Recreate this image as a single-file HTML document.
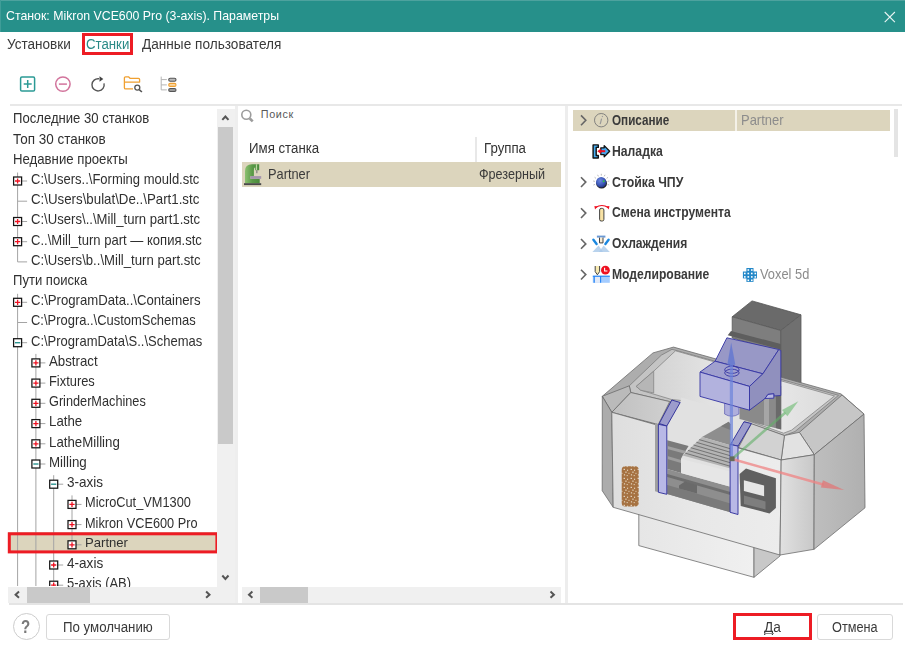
<!DOCTYPE html>
<html><head><meta charset="utf-8">
<style>
html,body{margin:0;padding:0;}
body{width:905px;height:656px;position:relative;overflow:hidden;background:#fff;font-family:"Liberation Sans",sans-serif;color:#333;}
.abs{position:absolute;}
.t{position:absolute;white-space:nowrap;}
#title{left:0;top:0;width:905px;height:32px;background:#26908a;}
#title .hl{position:absolute;left:0;top:0;width:905px;height:1px;background:#4da29e;}
#title .t{left:6px;top:0;line-height:32px;font-size:11.5px;color:#fff;}
.menu{top:33px;line-height:22px;font-size:13.4px;color:#3a3a3a;}
.row{position:absolute;left:0;height:20.21px;line-height:20.21px;font-size:12.5px;color:#333;white-space:nowrap;}
.pm{position:absolute;width:8px;height:8px;border:1px solid #4a4a4a;background:#fff;box-sizing:content-box;}
.pm i{position:absolute;background:#e01020;}
.pm i.h{left:1px;top:3px;width:6px;height:2px;}
.pm i.v{left:3px;top:1px;width:2px;height:6px;}
.pm.minus i.h{background:#208080;left:1px;top:3.5px;height:1px;}
.vl{position:absolute;width:1px;background:#808080;}
.hl2{position:absolute;height:1px;background:#808080;}
.btn{position:absolute;box-sizing:border-box;border:1.2px solid #d9d9d9;border-radius:3px;background:#fff;font-size:13px;color:#333;text-align:center;}
.prow{position:absolute;font-size:12.5px;font-weight:bold;color:#333;white-space:nowrap;}
</style></head><body>
<!-- TITLE -->
<div id="title" class="abs"><div class="hl"></div><div class="abs" style="left:0;top:0;width:1px;height:32px;background:#3f9d98"></div>
<svg class="abs" style="left:880px;top:7px" width="20" height="20"><path d="M4.7 5 L14.9 15.2 M14.9 5 L4.7 15.2" stroke="#e8f4f3" stroke-width="1.1" fill="none"/></svg>
</div>
<!-- MENU -->
<div class="t" style="left:5.60px;top:5.90px;line-height:20px;font-size:13.0px;letter-spacing:0.000px;color:#fff;transform:scaleX(0.9476);transform-origin:0 0;">Станок: Mikron VCE600 Pro (3-axis). Параметры</div>
<div class="t" style="left:7.00px;top:33.73px;line-height:20px;font-size:15.2px;letter-spacing:0.000px;color:#3a3a3a;transform:scaleX(0.8917);transform-origin:0 0;">Установки</div>
<div class="t" style="left:85.50px;top:33.73px;line-height:20px;font-size:15.2px;letter-spacing:0.000px;color:#2a8a86;transform:scaleX(0.8702);transform-origin:0 0;">Станки</div>
<div class="t" style="left:141.70px;top:33.73px;line-height:20px;font-size:15.2px;letter-spacing:0.000px;color:#3a3a3a;transform:scaleX(0.8977);transform-origin:0 0;">Данные пользователя</div>
<div class="abs" style="left:82.1px;top:33px;width:50.9px;height:22.1px;box-sizing:border-box;border:3px solid #ed1c24"></div>
<!-- TOOLBAR placeholder -->
<svg class="abs" style="left:0;top:66px" width="200" height="36" viewBox="0 66 200 36" fill="none">
<rect x="20.6" y="77.1" width="14" height="14" rx="1.3" stroke="#2b9a95" stroke-width="1.5"/>
<path d="M23.7 84.1 H31.7 M27.7 80.1 V88.1" stroke="#2b9a95" stroke-width="1.5"/>
<circle cx="62.9" cy="84.1" r="7.2" stroke="#d2749c" stroke-width="1.5"/>
<path d="M58.9 84.1 H66.9" stroke="#d2749c" stroke-width="1.5"/>
<path d="M99 78.8 A6.1 6.1 0 1 0 104 83.4" stroke="#555" stroke-width="1.4"/>
<polygon points="99.5,76.3 103.3,79 99.5,81.8" fill="#444"/>
<path d="M133 88.9 H125.6 Q124.4 88.9 124.4 87.7 V77.8 Q124.4 76.8 125.6 76.8 H128.5 L130 78.3 H138.5 Q139.6 78.3 139.6 79.4 V82.1 H124.4" stroke="#f0a030" stroke-width="1.3" stroke-linejoin="round"/>
<circle cx="137.3" cy="87.6" r="2.5" stroke="#555" stroke-width="1.3"/>
<path d="M139.2 89.6 L141.9 92" stroke="#555" stroke-width="1.6"/>
<path d="M161.2 76.6 V89.9 H166.8 M161.2 79.6 H166.8 M161.2 84.9 H166.8" stroke="#b4b4b4" stroke-width="1"/>
<rect x="168.7" y="78.2" width="7.3" height="3" rx="1.5" stroke="#555" stroke-width="1.1" fill="#bbb"/>
<rect x="168.7" y="83.4" width="7.3" height="3" rx="1.5" stroke="#f0a030" stroke-width="1.1" fill="#f8d8a8"/>
<rect x="168.7" y="88.5" width="7.3" height="3" rx="1.5" stroke="#555" stroke-width="1.1" fill="#999"/>
</svg>

<!-- PANELS -->
<div class="abs" style="left:9.6px;top:103.8px;width:892.4px;height:2px;background:#e8e8e8"></div>
<div class="abs" style="left:8.7px;top:603.2px;width:894.1px;height:1.6px;background:#e4e4e4"></div>
<div class="abs" id="left" style="left:0;top:106px;width:217.4px;height:481px;overflow:hidden">
<div class="abs" style="left:7.8px;top:426.3px;width:210.6px;height:21.1px;background:#dcd5bd"></div>
<svg class="abs" style="left:0;top:0" width="218" height="480" viewBox="0 106 218 480" fill="none"><path d="M17.6 172.5 V261.9" stroke="#a4a4a4" stroke-width="1"/><path d="M17.6 293.8 V590.0" stroke="#a4a4a4" stroke-width="1"/><path d="M35.9 353.9 V590.0" stroke="#a4a4a4" stroke-width="1"/><path d="M53.7 475.2 V590.0" stroke="#a4a4a4" stroke-width="1"/><path d="M72.0 495.4 V544.8" stroke="#a4a4a4" stroke-width="1"/><path d="M21.6 181.0 H27.1" stroke="#a4a4a4" stroke-width="1"/><path d="M17.6 201.2 H27.1" stroke="#a4a4a4" stroke-width="1"/><path d="M21.6 221.5 H27.1" stroke="#a4a4a4" stroke-width="1"/><path d="M21.6 241.7 H27.1" stroke="#a4a4a4" stroke-width="1"/><path d="M17.6 261.9 H27.1" stroke="#a4a4a4" stroke-width="1"/><path d="M21.6 302.3 H27.1" stroke="#a4a4a4" stroke-width="1"/><path d="M17.6 322.5 H27.1" stroke="#a4a4a4" stroke-width="1"/><path d="M21.6 342.7 H27.1" stroke="#a4a4a4" stroke-width="1"/><path d="M39.9 362.9 H45.4" stroke="#a4a4a4" stroke-width="1"/><path d="M39.9 383.1 H45.4" stroke="#a4a4a4" stroke-width="1"/><path d="M39.9 403.3 H45.4" stroke="#a4a4a4" stroke-width="1"/><path d="M39.9 423.6 H45.4" stroke="#a4a4a4" stroke-width="1"/><path d="M39.9 443.8 H45.4" stroke="#a4a4a4" stroke-width="1"/><path d="M39.9 464.0 H45.4" stroke="#a4a4a4" stroke-width="1"/><path d="M57.7 484.2 H63.2" stroke="#a4a4a4" stroke-width="1"/><path d="M76.0 504.4 H81.5" stroke="#a4a4a4" stroke-width="1"/><path d="M76.0 524.6 H81.5" stroke="#a4a4a4" stroke-width="1"/><path d="M76.0 544.8 H81.5" stroke="#a4a4a4" stroke-width="1"/><path d="M57.7 565.0 H63.2" stroke="#a4a4a4" stroke-width="1"/><path d="M57.7 585.2 H63.2" stroke="#a4a4a4" stroke-width="1"/><rect x="13.6" y="177.0" width="8" height="8" fill="#fff" stroke="#151515" stroke-width="1.25"/><path d="M15.0 181.0 H20.2 M17.6 178.4 V183.6" stroke="#ee1020" stroke-width="1.3"/><rect x="13.6" y="217.5" width="8" height="8" fill="#fff" stroke="#151515" stroke-width="1.25"/><path d="M15.0 221.5 H20.2 M17.6 218.9 V224.1" stroke="#ee1020" stroke-width="1.3"/><rect x="13.6" y="237.7" width="8" height="8" fill="#fff" stroke="#151515" stroke-width="1.25"/><path d="M15.0 241.7 H20.2 M17.6 239.1 V244.3" stroke="#ee1020" stroke-width="1.3"/><rect x="13.6" y="298.3" width="8" height="8" fill="#fff" stroke="#151515" stroke-width="1.25"/><path d="M15.0 302.3 H20.2 M17.6 299.7 V304.9" stroke="#ee1020" stroke-width="1.3"/><rect x="13.6" y="338.7" width="8" height="8" fill="#fff" stroke="#151515" stroke-width="1.25"/><path d="M15.0 342.7 H20.2" stroke="#2a9490" stroke-width="1.4"/><rect x="31.9" y="358.9" width="8" height="8" fill="#fff" stroke="#151515" stroke-width="1.25"/><path d="M33.3 362.9 H38.5 M35.9 360.3 V365.5" stroke="#ee1020" stroke-width="1.3"/><rect x="31.9" y="379.1" width="8" height="8" fill="#fff" stroke="#151515" stroke-width="1.25"/><path d="M33.3 383.1 H38.5 M35.9 380.5 V385.7" stroke="#ee1020" stroke-width="1.3"/><rect x="31.9" y="399.3" width="8" height="8" fill="#fff" stroke="#151515" stroke-width="1.25"/><path d="M33.3 403.3 H38.5 M35.9 400.7 V405.9" stroke="#ee1020" stroke-width="1.3"/><rect x="31.9" y="419.6" width="8" height="8" fill="#fff" stroke="#151515" stroke-width="1.25"/><path d="M33.3 423.6 H38.5 M35.9 421.0 V426.2" stroke="#ee1020" stroke-width="1.3"/><rect x="31.9" y="439.8" width="8" height="8" fill="#fff" stroke="#151515" stroke-width="1.25"/><path d="M33.3 443.8 H38.5 M35.9 441.2 V446.4" stroke="#ee1020" stroke-width="1.3"/><rect x="31.9" y="460.0" width="8" height="8" fill="#fff" stroke="#151515" stroke-width="1.25"/><path d="M33.3 464.0 H38.5" stroke="#2a9490" stroke-width="1.4"/><rect x="49.7" y="480.2" width="8" height="8" fill="#fff" stroke="#151515" stroke-width="1.25"/><path d="M51.1 484.2 H56.3" stroke="#2a9490" stroke-width="1.4"/><rect x="68.0" y="500.4" width="8" height="8" fill="#fff" stroke="#151515" stroke-width="1.25"/><path d="M69.4 504.4 H74.6 M72.0 501.8 V507.0" stroke="#ee1020" stroke-width="1.3"/><rect x="68.0" y="520.6" width="8" height="8" fill="#fff" stroke="#151515" stroke-width="1.25"/><path d="M69.4 524.6 H74.6 M72.0 522.0 V527.2" stroke="#ee1020" stroke-width="1.3"/><rect x="68.0" y="540.8" width="8" height="8" fill="#fff" stroke="#151515" stroke-width="1.25"/><path d="M69.4 544.8 H74.6 M72.0 542.2 V547.4" stroke="#ee1020" stroke-width="1.3"/><rect x="49.7" y="561.0" width="8" height="8" fill="#fff" stroke="#151515" stroke-width="1.25"/><path d="M51.1 565.0 H56.3 M53.7 562.4 V567.6" stroke="#ee1020" stroke-width="1.3"/><rect x="49.7" y="581.2" width="8" height="8" fill="#fff" stroke="#151515" stroke-width="1.25"/><path d="M51.1 585.2 H56.3 M53.7 582.6 V587.8" stroke="#ee1020" stroke-width="1.3"/><rect x="9.3" y="533.8" width="207.6" height="18.1" stroke="#ed1c24" stroke-width="3"/></svg>
<div class="t" style="left:13.20px;top:2.34px;line-height:20px;font-size:14.6px;letter-spacing:0.000px;color:#303030;transform:scaleX(0.8974);transform-origin:0 0;">Последние 30 станков</div>
<div class="t" style="left:13.20px;top:22.55px;line-height:20px;font-size:14.6px;letter-spacing:0.000px;color:#303030;transform:scaleX(0.9226);transform-origin:0 0;">Топ 30 станков</div>
<div class="t" style="left:13.20px;top:42.76px;line-height:20px;font-size:14.6px;letter-spacing:0.000px;color:#303030;transform:scaleX(0.9038);transform-origin:0 0;">Недавние проекты</div>
<div class="t" style="left:30.90px;top:62.97px;line-height:20px;font-size:14.6px;letter-spacing:0.000px;color:#303030;transform:scaleX(0.8909);transform-origin:0 0;">C:\Users..\Forming mould.stc</div>
<div class="t" style="left:30.90px;top:83.18px;line-height:20px;font-size:14.6px;letter-spacing:0.000px;color:#303030;transform:scaleX(0.9103);transform-origin:0 0;">C:\Users\bulat\De..\Part1.stc</div>
<div class="t" style="left:30.90px;top:103.39px;line-height:20px;font-size:14.6px;letter-spacing:0.000px;color:#303030;transform:scaleX(0.8984);transform-origin:0 0;">C:\Users\..\Mill_turn part1.stc</div>
<div class="t" style="left:30.90px;top:123.60px;line-height:20px;font-size:14.6px;letter-spacing:0.000px;color:#303030;transform:scaleX(0.8940);transform-origin:0 0;">C..\Mill_turn part — копия.stc</div>
<div class="t" style="left:30.90px;top:143.81px;line-height:20px;font-size:14.6px;letter-spacing:0.000px;color:#303030;transform:scaleX(0.9010);transform-origin:0 0;">C:\Users\b..\Mill_turn part.stc</div>
<div class="t" style="left:13.20px;top:164.02px;line-height:20px;font-size:14.6px;letter-spacing:0.000px;color:#303030;transform:scaleX(0.8952);transform-origin:0 0;">Пути поиска</div>
<div class="t" style="left:30.90px;top:184.23px;line-height:20px;font-size:14.6px;letter-spacing:0.000px;color:#303030;transform:scaleX(0.9009);transform-origin:0 0;">C:\ProgramData..\Containers</div>
<div class="t" style="left:30.90px;top:204.44px;line-height:20px;font-size:14.6px;letter-spacing:0.000px;color:#303030;transform:scaleX(0.8869);transform-origin:0 0;">C:\Progra..\CustomSchemas</div>
<div class="t" style="left:30.90px;top:224.65px;line-height:20px;font-size:14.6px;letter-spacing:0.000px;color:#303030;transform:scaleX(0.8908);transform-origin:0 0;">C:\ProgramData\S..\Schemas</div>
<div class="t" style="left:49.00px;top:244.86px;line-height:20px;font-size:14.6px;letter-spacing:0.000px;color:#303030;transform:scaleX(0.9094);transform-origin:0 0;">Abstract</div>
<div class="t" style="left:49.00px;top:265.07px;line-height:20px;font-size:14.6px;letter-spacing:0.000px;color:#303030;transform:scaleX(0.8821);transform-origin:0 0;">Fixtures</div>
<div class="t" style="left:49.00px;top:285.28px;line-height:20px;font-size:14.6px;letter-spacing:0.000px;color:#303030;transform:scaleX(0.8707);transform-origin:0 0;">GrinderMachines</div>
<div class="t" style="left:49.00px;top:305.49px;line-height:20px;font-size:14.6px;letter-spacing:0.000px;color:#303030;transform:scaleX(0.9087);transform-origin:0 0;">Lathe</div>
<div class="t" style="left:49.00px;top:325.70px;line-height:20px;font-size:14.6px;letter-spacing:0.000px;color:#303030;transform:scaleX(0.9087);transform-origin:0 0;">LatheMilling</div>
<div class="t" style="left:49.00px;top:345.91px;line-height:20px;font-size:14.6px;letter-spacing:0.000px;color:#303030;transform:scaleX(0.9136);transform-origin:0 0;">Milling</div>
<div class="t" style="left:67.20px;top:366.12px;line-height:20px;font-size:14.6px;letter-spacing:0.000px;color:#303030;transform:scaleX(0.9269);transform-origin:0 0;">3-axis</div>
<div class="t" style="left:85.10px;top:386.33px;line-height:20px;font-size:14.6px;letter-spacing:0.000px;color:#303030;transform:scaleX(0.8759);transform-origin:0 0;">MicroCut_VM1300</div>
<div class="t" style="left:85.10px;top:406.54px;line-height:20px;font-size:14.6px;letter-spacing:0.000px;color:#303030;transform:scaleX(0.8720);transform-origin:0 0;">Mikron VCE600 Pro</div>
<div class="t" style="left:85.10px;top:427.17px;line-height:20px;font-size:13.4px;letter-spacing:0.000px;color:#303030;transform:scaleX(0.9785);transform-origin:0 0;">Partner</div>
<div class="t" style="left:67.20px;top:446.96px;line-height:20px;font-size:14.6px;letter-spacing:0.000px;color:#303030;transform:scaleX(0.9295);transform-origin:0 0;">4-axis</div>
<div class="t" style="left:67.20px;top:467.17px;line-height:20px;font-size:14.6px;letter-spacing:0.000px;color:#303030;transform:scaleX(0.8878);transform-origin:0 0;">5-axis (AB)</div>
</div>
<div class="abs" style="left:217.4px;top:108.6px;width:17.6px;height:494.2px;background:#f0f0f0"></div>
<div class="abs" style="left:218px;top:127px;width:15px;height:317.4px;background:#c9c9c9"></div>
<div class="abs" style="left:8px;top:587px;width:227px;height:15.8px;background:#f0f0f0"></div>
<div class="abs" style="left:26.5px;top:587px;width:63px;height:15.5px;background:#c9c9c9"></div>
<div class="abs" style="left:235px;top:106px;width:2.6px;height:496.8px;background:#eeeeee"></div>
<div class="abs" style="left:241.7px;top:587px;width:319.4px;height:15.8px;background:#f0f0f0"></div>
<div class="abs" style="left:260px;top:587px;width:47.7px;height:15.5px;background:#c9c9c9"></div>
<div class="abs" style="left:565.2px;top:106px;width:2.9px;height:496.8px;background:#ededed"></div>
<svg class="abs" style="left:240px;top:108px" width="16" height="16"><circle cx="6.3" cy="6.8" r="4.5" stroke="#9c9c9c" stroke-width="1.6" fill="none"/><path d="M9.8 10.5 L12.7 13.4" stroke="#9c9c9c" stroke-width="2.6"/></svg>
<div class="t" style="left:260.80px;top:103.76px;line-height:20px;font-size:10.8px;letter-spacing:0.635px;color:#585858;">Поиск</div>
<div class="t" style="left:248.80px;top:138.62px;line-height:20px;font-size:13.8px;letter-spacing:0.000px;color:#333;transform:scaleX(0.9605);transform-origin:0 0;">Имя станка</div>
<div class="t" style="left:483.60px;top:138.62px;line-height:20px;font-size:13.8px;letter-spacing:0.000px;color:#333;transform:scaleX(0.9603);transform-origin:0 0;">Группа</div>
<div class="abs" style="left:475px;top:136.5px;width:1.6px;height:25.5px;background:#e8e8e8"></div>
<div class="abs" style="left:242px;top:161.9px;width:318.8px;height:24.7px;background:#dcd5bd"></div>
<div class="t" style="left:268.10px;top:163.97px;line-height:20px;font-size:14.8px;letter-spacing:0.000px;color:#3a3a3a;transform:scaleX(0.8654);transform-origin:0 0;">Partner</div>
<div class="t" style="left:478.70px;top:163.97px;line-height:20px;font-size:14.8px;letter-spacing:0.000px;color:#3a3a3a;transform:scaleX(0.8524);transform-origin:0 0;">Фрезерный</div>
<svg class="abs" style="left:0;top:0" width="905" height="656"><path d="M222.3 119.9 L225.4 116.5 L228.5 119.9" stroke="#555" stroke-width="2.0" fill="none"/><path d="M222.3 575.5 L225.4 578.9000000000001 L228.5 575.5" stroke="#555" stroke-width="2.0" fill="none"/><path d="M19.0 591.6 L15.600000000000001 594.7 L19.0 597.8000000000001" stroke="#555" stroke-width="2.0" fill="none"/><path d="M206.10000000000002 591.6 L209.5 594.7 L206.10000000000002 597.8000000000001" stroke="#555" stroke-width="2.0" fill="none"/><path d="M252.39999999999998 591.6 L249.0 594.7 L252.39999999999998 597.8000000000001" stroke="#555" stroke-width="2.0" fill="none"/><path d="M550.5 591.6 L553.9000000000001 594.7 L550.5 597.8000000000001" stroke="#555" stroke-width="2.0" fill="none"/></svg>
<div class="abs" style="left:572.7px;top:109.8px;width:317.4px;height:21.1px;background:#dcd5bd"></div>
<div class="abs" style="left:735px;top:109.8px;width:2px;height:21.1px;background:#f4f1e8"></div>
<div class="abs" style="left:894px;top:108.6px;width:4.4px;height:48px;background:#e4e4e4"></div>
<div class="t" style="left:612.20px;top:110.15px;line-height:20px;font-size:14.3px;letter-spacing:0.000px;color:#3a3a3a;font-weight:bold;transform:scaleX(0.8170);transform-origin:0 0;">Описание</div>
<div class="t" style="left:612.20px;top:141.05px;line-height:20px;font-size:14.3px;letter-spacing:0.000px;color:#3a3a3a;font-weight:bold;transform:scaleX(0.8537);transform-origin:0 0;">Наладка</div>
<div class="t" style="left:612.20px;top:171.85px;line-height:20px;font-size:14.3px;letter-spacing:0.000px;color:#3a3a3a;font-weight:bold;transform:scaleX(0.8593);transform-origin:0 0;">Стойка ЧПУ</div>
<div class="t" style="left:612.20px;top:202.15px;line-height:20px;font-size:14.3px;letter-spacing:0.000px;color:#3a3a3a;font-weight:bold;transform:scaleX(0.8471);transform-origin:0 0;">Смена инструмента</div>
<div class="t" style="left:612.20px;top:233.35px;line-height:20px;font-size:14.3px;letter-spacing:0.000px;color:#3a3a3a;font-weight:bold;transform:scaleX(0.8456);transform-origin:0 0;">Охлаждения</div>
<div class="t" style="left:612.20px;top:264.35px;line-height:20px;font-size:14.3px;letter-spacing:0.000px;color:#3a3a3a;font-weight:bold;transform:scaleX(0.8478);transform-origin:0 0;">Моделирование</div>
<svg class="abs" style="left:0;top:0" width="905" height="656"><path d="M581 115.39999999999999 L585.8 120.3 L581 125.2" stroke="#666" stroke-width="1.6" fill="none"/><path d="M581 177.2 L585.8 182.1 L581 187.0" stroke="#666" stroke-width="1.6" fill="none"/><path d="M581 208.2 L585.8 213.1 L581 218.0" stroke="#666" stroke-width="1.6" fill="none"/><path d="M581 239.0 L585.8 243.9 L581 248.8" stroke="#666" stroke-width="1.6" fill="none"/><path d="M581 269.70000000000005 L585.8 274.6 L581 279.5" stroke="#666" stroke-width="1.6" fill="none"/></svg>
<div class="t" style="left:741.00px;top:110.24px;line-height:20px;font-size:14.6px;letter-spacing:0.000px;color:#8c8c8c;transform:scaleX(0.8877);transform-origin:0 0;">Partner</div>
<div class="t" style="left:759.90px;top:264.24px;line-height:20px;font-size:14.6px;letter-spacing:0.000px;color:#8c8c8c;transform:scaleX(0.8802);transform-origin:0 0;">Voxel 5d</div>
<svg class="abs" style="left:568px;top:290px;filter:blur(0.3px)" width="337" height="312" viewBox="568 290 337 312">
<defs>
<linearGradient id="gTop" gradientUnits="userSpaceOnUse" x1="640" y1="0" x2="840" y2="0"><stop offset="0" stop-color="#d0d0d0"/><stop offset="0.35" stop-color="#e2e2e2"/><stop offset="0.7" stop-color="#e6e6e6"/><stop offset="1" stop-color="#dadada"/></linearGradient>
<linearGradient id="gFront" gradientUnits="userSpaceOnUse" x1="613" y1="0" x2="781" y2="0"><stop offset="0" stop-color="#dedede"/><stop offset="0.5" stop-color="#e8e8e8"/><stop offset="1" stop-color="#ececec"/></linearGradient>
<linearGradient id="gCh" gradientUnits="userSpaceOnUse" x1="781" y1="0" x2="814" y2="0"><stop offset="0" stop-color="#e0e0e0"/><stop offset="1" stop-color="#c8c8c8"/></linearGradient>
<linearGradient id="gSide" gradientUnits="userSpaceOnUse" x1="814" y1="0" x2="865" y2="0"><stop offset="0" stop-color="#bebebe"/><stop offset="1" stop-color="#b0b0b0"/></linearGradient>
<linearGradient id="gChF" gradientUnits="userSpaceOnUse" x1="612" y1="0" x2="670" y2="0"><stop offset="0" stop-color="#c0c0c0"/><stop offset="1" stop-color="#d0d0d0"/></linearGradient>
<linearGradient id="gBase" gradientUnits="userSpaceOnUse" x1="638" y1="0" x2="754" y2="0"><stop offset="0" stop-color="#e6e6e6"/><stop offset="1" stop-color="#f0f0f0"/></linearGradient>
<pattern id="pLogo" width="7" height="9" patternUnits="userSpaceOnUse"><rect width="7" height="9" fill="#a67242"/><rect x="0.6" y="0.8" width="1.3" height="1.2" fill="#e8dccc"/><rect x="4" y="1.6" width="1.1" height="1.4" fill="#dcc8ac"/><rect x="2.2" y="3.6" width="1.5" height="1.1" fill="#e4d4bc"/><rect x="5.4" y="4.8" width="1.1" height="1.2" fill="#d8c0a0"/><rect x="0.9" y="6.2" width="1.2" height="1.3" fill="#e0d0b8"/><rect x="3.6" y="7.1" width="1.3" height="1" fill="#dcc8ac"/></pattern>
</defs>
<g stroke="#6c6c6c" stroke-width="0.8" stroke-linejoin="round">
<!-- base -->
<polygon points="638.8,512 754,545 754,577.3 638.8,545.6" fill="url(#gBase)"/>
<polygon points="754,545 780,553 780,556 754,577.3" fill="#c8c8c8"/>
<!-- column -->
<polygon points="732.2,316.8 752,300.9 801,314.8 780.8,330.5" fill="#6a6a6a" stroke="#555"/>
<polygon points="732.2,316.8 780.8,330.5 780.8,352 732.2,338" fill="#7e7e7e" stroke="#5a5a5a"/>
<polygon points="780.8,330.5 801,314.8 801,386 780.8,381" fill="#707070" stroke="#5a5a5a"/>
<polygon points="727.7,335.2 731,331 780.8,344 780.8,349.5" fill="#5e5e5e" stroke="none"/>
<!-- outer top hull -->
<polygon points="602.3,396.3 653,352.9 673.5,347.1 841,393.9 864,414.1 814.3,454.7 781.2,460 611.8,412.3" fill="#adadad"/>
<!-- rim -->
<polygon points="629.3,385.8 661.3,355.2 672,349.3 838.5,395.3 795,431.5 784.4,435.5 744,421.6 669.7,401.6 630.8,392.5" fill="#c4c4c4" stroke="#7c7c7c"/>
<!-- inner top light face -->
<polygon points="636.2,386.4 653.7,371.2 675.5,350.8 834.5,396 791.5,430.2 783.6,433.2 745.2,419.6 680.2,400.4 671.2,399.4 640.7,390.2" fill="url(#gTop)" stroke="#858585"/>
<!-- inner left wall -->
<polygon points="636.2,386.4 653.7,371.2 653.7,393 640.7,390.2" fill="#b6b6b6" stroke="#858585"/>
<!-- left chamfer faces -->
<polygon points="602.3,396.3 629.3,385.8 630.8,392.5 611.8,412.3" fill="#bababa"/>
<polygon points="611.8,412.3 630.8,392.5 669.7,401.6 658.3,424.5" fill="url(#gChF)"/>
<!-- right chamfer face -->
<polygon points="842,395 864,414.1 814.3,454.7 799.4,432.3" fill="#c6c6c6"/>
<!-- front right top chamfer -->
<polygon points="784.4,435.5 799.4,432.3 814.3,454.7 781.2,460" fill="#e2e2e2"/>
<polygon points="738.5,447.5 751.3,423.7 784.4,435.5 781.2,460" fill="#d2d2d2"/>
<!-- left narrow side -->
<polygon points="602.3,396.3 611.8,412.3 613.2,507.3 602.2,490.7" fill="#acacac"/>
<!-- front face -->
<polygon points="611.8,412.3 781.2,460 780,555 613.2,507.3" fill="url(#gFront)"/>
<!-- front-right chamfer panel -->
<polygon points="781.2,460 814.3,454.7 814,549.3 780,555" fill="url(#gCh)"/>
<!-- right side -->
<polygon points="814.3,454.7 864,414.1 865,507.8 814,549.3" fill="url(#gSide)"/>
</g>
<!-- door opening interior -->
<g stroke="none">
<polygon points="666.8,426 680.2,402.5 681.5,397.5 746,416.5 744,421.8 730.5,444.5 730.5,512.3 666.8,494" fill="#e1e1e1"/>
<!-- dark bands left -->
<polygon points="667.3,440.3 688.6,446.1 682.7,455.4 681,458.7 681,473 667.3,469" fill="#7a7a7a"/>
<polygon points="667.3,446 686,451 684,453.5 667.3,449" fill="#a0a0a0"/>
<polygon points="667.3,456 681,460 681,463 667.3,459" fill="#9c9c9c"/>
<!-- below table -->
<polygon points="667.3,469 681,473 729.6,486.4 730.5,512.3 667.3,494" fill="#8e8e8e"/>
<polygon points="667.3,474 730.5,492 730.5,495 667.3,477" fill="#6e6e6e"/>
<polygon points="667.3,485 730.5,503.5 730.5,512.3 667.3,494" fill="#7a7a7a"/>
<polygon points="679,485.5 685,481.5 697,485 697,493.5 679,488.5" fill="#6a6a6a"/>
<!-- slope behind table -->
<polygon points="702,436.9 728.8,421.8 730.5,424.3 730.5,445.3" fill="#8e8e8e"/>
<polygon points="721,426.3 728.8,421.8 730.5,424.3 730.5,430" fill="#7a7a7a"/>
<!-- table top ridged -->
<polygon points="682.7,455.4 702,436.9 730.5,445.3 730.5,468.5" fill="#b4b4b4"/>
<g stroke="#6c6c6c" stroke-width="0.9">
<path d="M699.2 439.6 L730.5 448.8 M696.4 442.3 L730.5 452.3 M693.6 445 L730.5 455.8 M690.8 447.7 L730.5 459.3 M688 450.4 L730.5 462.8 M685.2 453.1 L730.5 466.3"/>
</g>
<!-- table front -->
<polygon points="681,458.7 729.6,471.3 729.6,486.4 681,473" fill="#e6e6e6"/>
</g>
<!-- column lower visible part under head -->
<polygon points="739.5,398 781.2,386 781.2,429.5 739.5,419" fill="#8a8a8a"/>
<polygon points="764,398 769,397 769,426 764,425" fill="#a6a6a6"/>
<polygon points="775.9,380 781.2,380 781.2,429.5 775.9,428" fill="#6a6a6a"/>
<!-- door frames -->
<g stroke="#2a2a98" stroke-width="0.9" stroke-linejoin="round">
<polygon points="655,423 658.4,424.3 658.4,492.3 655,491.2" fill="#a0a0a0" stroke="none"/>
<polygon points="659.2,423.5 671.8,400 680.2,402.5 666.8,426" fill="#9c9ccc"/>
<polygon points="658.4,424.3 666.8,426 666.8,494.3 658.4,492.3" fill="#b8b8e6"/>
<polygon points="730.5,444.5 743.9,421.8 751.4,423.5 738,446.1" fill="#9c9ccc"/>
<polygon points="730.1,444.5 738,446.1 738,514.5 730.1,512.3" fill="#b8b8e6"/>
</g>
<!-- spindle -->
<g stroke="#5c5cb0" stroke-width="0.7">
<path d="M724.6 398 V414 Q731.7 418.5 738.9 414 V398 Z" fill="#aeaedc"/>
</g>
<!-- head -->
<g stroke="#3434a4" stroke-width="0.9" stroke-linejoin="round">
<polygon points="726.9,337.8 778.8,349.5 762.9,373.8 715.1,361.2" fill="#9898c6"/>
<polygon points="715.1,361.2 762.9,373.8 749.5,386.4 700,372.1" fill="#a0a0ce"/>
<polygon points="700,372.1 749.5,386.4 749.5,410.2 700,396.4" fill="#b2b2de"/>
<polygon points="778.8,349.5 780.8,350.5 780.8,395.5 773.8,396 773.8,393.8 768,394.4 765,398.5 749.5,410.2 749.5,386.4 762.9,373.8" fill="#9090be"/>
<polygon points="765,398.5 768,394.4 773.8,393.8 773.8,398.2" fill="#b8b8e2"/>
<ellipse cx="731.9" cy="369.8" rx="7.2" ry="3.6" fill="none"/>
<ellipse cx="731.9" cy="372.8" rx="7.2" ry="3.6" fill="none"/>
</g>
<!-- control panel -->
<polygon points="739.6,473.9 746,468.6 775.9,478.2 775.9,508 769.5,513.4 740.7,505.9" fill="#606060"/>
<polygon points="743.9,480.3 764.1,485.6 764.1,496.3 743.9,491" fill="#e6e6e6"/>
<polygon points="744,495.5 765.5,501.5 765.5,509.5 744,504" fill="#7e7e7e"/>
<!-- logo -->
<rect x="621.7" y="466.3" width="17" height="40.3" rx="3.5" fill="url(#pLogo)"/>
<!-- axes -->
<g>
<path d="M731.4 459 L731.4 364" stroke="#6c84dc" stroke-width="3.2" opacity="0.7"/>
<polygon points="731.2,342.6 735.3,364.8 727.3,364.8" fill="#6478d0" opacity="0.85"/>
<path d="M732.1 459 L785.5 412.4" stroke="#62b068" stroke-width="2.6" opacity="0.6"/>
<polygon points="798.3,401.3 787.4,416.2 782,410" fill="#7cc080" opacity="0.7"/>
<path d="M732.1 459 L824 484.8" stroke="#f08484" stroke-width="2.6" opacity="0.75"/>
<polygon points="844.2,489.9 820.9,487.4 822.9,480.2" fill="#de7a7a" opacity="0.8"/>
<rect x="729.8" y="456.4" width="4.8" height="4.8" fill="#666a5a"/>
</g>
</svg>

<svg class="abs" style="left:0;top:0" width="905" height="656" fill="none">
<defs>
<linearGradient id="gGreen" x1="0" y1="0" x2="1" y2="0"><stop offset="0" stop-color="#8cc070"/><stop offset="0.5" stop-color="#5a9a48"/><stop offset="1" stop-color="#4a8a3c"/></linearGradient>
<radialGradient id="gBall" cx="0.4" cy="0.35" r="0.7"><stop offset="0" stop-color="#6c88e0"/><stop offset="0.6" stop-color="#3c58b8"/><stop offset="1" stop-color="#20307c"/></radialGradient>
</defs>
<!-- list machine icon -->
<path d="M245 183.3 V171 Q245 164.2 252 164.2 H259.2 V170.2 H255.2 V167.6 Q254 167.4 253.9 170 V176.2 H250.4 V178.8 H259.7 V183.3 Z" fill="url(#gGreen)"/>
<rect x="255.9" y="164.2" width="1.2" height="6" fill="#b8d8a0"/>
<rect x="256.3" y="170.2" width="1.1" height="3" fill="#777"/>
<rect x="250.4" y="176.1" width="10.8" height="2.7" fill="#a494ac"/>
<rect x="244" y="183.2" width="17.2" height="1.9" fill="#4a4a4a"/>
<!-- info icon -->
<circle cx="601.2" cy="120.2" r="6.7" stroke="#777" stroke-width="0.9"/>
<path d="M602.2 116 L602.6 116.9 M601.6 118.6 L600.2 124.2" stroke="#9a9a9a" stroke-width="1.2"/>
<!-- naladka icon -->
<path d="M593.1 144.9 H598.3 V147.4 H596.2 V155.5 H598.3 V158 H593.1 Z" fill="#48acf0" stroke="#111" stroke-width="1.4" stroke-linejoin="round"/>
<path d="M600.8 147.8 H604.2 V145.6 L609.7 151.2 L604.2 156.8 V154.6 H600.8 Z" fill="#4aa8ee" stroke="#111" stroke-width="1.3" stroke-linejoin="round"/>
<path d="M605.2 151.2 H600" stroke="#ee1020" stroke-width="2"/>
<polygon points="597.3,151.2 600.8,148.6 600.8,153.8" fill="#ee1020"/>
<!-- stoika icon -->
<g stroke="#b4b4b4" stroke-width="0.9">
<path d="M601.3 173.8 V175.6 M597.6 174.8 L598.4 176.4 M605 174.8 L604.2 176.4 M594.6 177.3 L596 178.4 M608 177.3 L606.6 178.4 M593.2 181 L594.9 181.4 M609.4 181 L607.7 181.4 M593.4 185 L595 184.4 M609.2 185 L607.6 184.4"/>
</g>
<ellipse cx="601.6" cy="183.4" rx="5.4" ry="5.2" fill="#222"/>
<circle cx="601.2" cy="182.2" r="5.2" fill="url(#gBall)"/>
<circle cx="603.7" cy="181.2" r="1" fill="#30c040"/>
<!-- smena icon -->
<rect x="599.6" y="208.4" width="4.3" height="12.6" rx="1.6" fill="#f8e2a4" stroke="#444" stroke-width="1"/>
<path d="M595.6 207.6 Q601.8 203.4 608.2 207.6" stroke="#ee1020" stroke-width="1.2"/>
<polygon points="594.4,206 597.6,206.4 595,209.6" fill="#ee1020"/>
<polygon points="609.4,206 606.2,206.4 608.8,209.6" fill="#ee1020"/>
<!-- ohlazhdenie icon -->
<rect x="596.9" y="235.6" width="8.5" height="2" fill="#6a98d4"/>
<path d="M599.5 237.6 V242.9 H603 V237.6" fill="#f4ecd8" stroke="#444" stroke-width="1"/>
<path d="M593.4 239.8 L596.6 244" stroke="#1a88e0" stroke-width="2.4" stroke-linecap="round"/>
<path d="M608.6 239.8 L605.4 244" stroke="#1a88e0" stroke-width="2.4" stroke-linecap="round"/>
<polygon points="598.6,245.6 592.4,251.9 603,251.9" fill="#a8c8e8" opacity="0.8"/>
<polygon points="603.6,245.6 599,251.9 609.8,251.9" fill="#a8c8e8" opacity="0.8"/>
<!-- modelirovanie icon -->
<path d="M595.2 266 V271.6 L597.4 274.8 L599.6 271.6 V266" fill="#f8eab0" stroke="#444" stroke-width="1"/>
<circle cx="605.4" cy="270.2" r="4.4" fill="#ee1020"/>
<path d="M604.6 267.8 V271 H607.4" stroke="#fff" stroke-width="1.1"/>
<rect x="592.8" y="276" width="17" height="6.8" fill="#a4ccff"/>
<rect x="594.8" y="276.6" width="5.5" height="6.2" fill="#e2eaf8"/>
<path d="M592.8 276.2 H609.8" stroke="#2484f4" stroke-width="1.2"/>
<path d="M594.2 276 V282.8 M600.6 276 V282.8" stroke="#2484f4" stroke-width="1.1"/>
<!-- voxel icon -->
<g fill="#2488c8">
<rect x="746.4" y="268" width="7.1" height="13.9"/>
<rect x="742.9" y="271.5" width="14.1" height="6.9"/>
</g>
<g fill="#fff">
<rect x="747.5" y="269.2" width="1.6" height="1.6"/><rect x="751" y="269.2" width="1.6" height="1.6"/>
<rect x="744" y="272.7" width="1.6" height="1.6"/><rect x="747.5" y="272.7" width="1.6" height="1.6"/><rect x="751" y="272.7" width="1.6" height="1.6"/><rect x="754.5" y="272.7" width="1.6" height="1.6"/>
<rect x="744" y="276.1" width="1.6" height="1.6"/><rect x="747.5" y="276.1" width="1.6" height="1.6"/><rect x="751" y="276.1" width="1.6" height="1.6"/><rect x="754.5" y="276.1" width="1.6" height="1.6"/>
<rect x="747.5" y="279.5" width="1.6" height="1.6"/><rect x="751" y="279.5" width="1.6" height="1.6"/>
</g>
</svg>

<!-- BOTTOM -->
<div class="abs" style="left:12.7px;top:612.8px;width:27.1px;height:27.1px;box-sizing:border-box;border:1.3px solid #cdcdcd;border-radius:13.6px"></div>
<div class="t" style="left:21.30px;top:617.24px;line-height:20px;font-size:17.5px;letter-spacing:0.000px;color:#7a7a7a;font-weight:bold;transform:scaleX(0.8606);transform-origin:0 0;">?</div>
<div class="btn" style="left:45.9px;top:614.2px;width:123.7px;height:25.4px"></div>
<div class="t" style="left:63.30px;top:616.73px;line-height:20px;font-size:15.2px;letter-spacing:0.000px;color:#3a3a3a;transform:scaleX(0.8746);transform-origin:0 0;">По умолчанию</div>
<div class="abs" style="left:733.4px;top:613.2px;width:78.5px;height:27.2px;box-sizing:border-box;border:3px solid #ed1c24;background:#fff"></div>
<div class="t" style="left:763.60px;top:616.73px;line-height:20px;font-size:15.2px;letter-spacing:0.000px;color:#3a3a3a;transform:scaleX(0.9014);transform-origin:0 0;">Да</div>
<div class="abs" style="left:763.8px;top:632.6px;width:9.8px;height:1.6px;background:#8c8c8c"></div>
<div class="btn" style="left:816.5px;top:614.2px;width:76.4px;height:25.4px"></div>
<div class="t" style="left:832.20px;top:616.73px;line-height:20px;font-size:15.2px;letter-spacing:0.000px;color:#3a3a3a;transform:scaleX(0.8380);transform-origin:0 0;">Отмена</div>
</body></html>
